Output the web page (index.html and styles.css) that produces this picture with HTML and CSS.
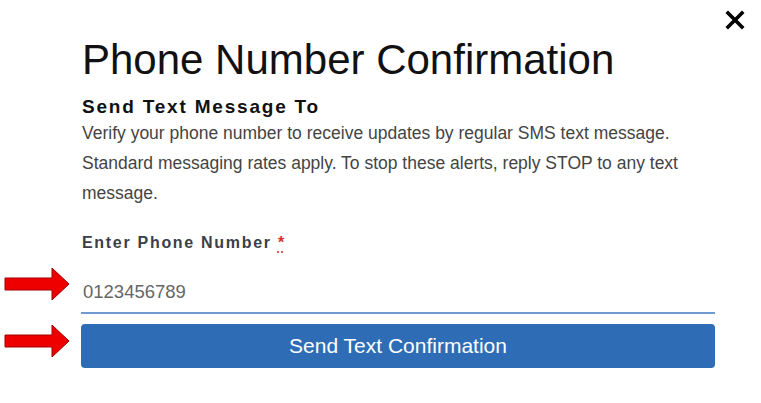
FILE: index.html
```html
<!DOCTYPE html>
<html lang="en">
<head>
  <meta charset="UTF-8">
  <meta name="viewport" content="width=device-width, initial-scale=1.0">
  <title>Phone Number Confirmation</title>
  <link rel="stylesheet" href="styles.css">
</head>
<body>
  <div class="modal">
    <button class="close-btn" aria-label="Close">
      <svg width="20" height="20" viewBox="0 0 20 20">
        <path d="M3 3 L17 17 M17 3 L3 17" stroke="#000" stroke-width="3.6" stroke-linecap="square"/>
      </svg>
    </button>

    <div class="content">
      <h1>Phone Number Confirmation</h1>
      <h2>Send Text Message To</h2>
      <p class="intro">Verify your phone number to receive updates by regular SMS text message. Standard messaging rates apply. To stop these alerts, reply STOP to any text message.</p>

      <label for="phone" class="field-label">Enter Phone Number <abbr title="required">*</abbr></label>
    </div>

    <div class="row">
      <div class="gutter">
        <svg class="arrow" width="66" height="34" viewBox="0 0 66 34">
          <polygon points="1,11 48,11 48,1 65,17 48,33 48,23 1,23" fill="#ee0000" stroke="#a30000" stroke-width="1"/>
        </svg>
      </div>
      <input type="text" id="phone" class="phone-input" value="0123456789">
    </div>

    <div class="row">
      <div class="gutter">
        <svg class="arrow" width="66" height="34" viewBox="0 0 66 34">
          <polygon points="1,11 48,11 48,1 65,17 48,33 48,23 1,23" fill="#ee0000" stroke="#a30000" stroke-width="1"/>
        </svg>
      </div>
      <button class="send-btn">Send Text Confirmation</button>
    </div>
  </div>
</body>
</html>
```

FILE: styles.css
```css
body {
  margin: 0;
  font-family: "Liberation Sans", Arial, sans-serif;
  background: #fff;
}
.modal {
  position: relative;
  width: 761px;
  height: 403px;
}
.close-btn {
  position: absolute;
  top: 10px;
  right: 16px;
  padding: 0;
  border: none;
  background: none;
  cursor: pointer;
}
.content {
  padding: 36px 0 0 82px;
  width: 634px;
}
h1 {
  margin: 0;
  font-size: 42px;
  line-height: 48px;
  font-weight: normal;
  color: #111;
}
h2 {
  margin: 12px 0 0;
  font-size: 19px;
  line-height: 22px;
  letter-spacing: 1.8px;
  color: #111;
}
.intro {
  margin: 0;
  font-size: 17.5px;
  line-height: 30px;
  color: #444;
}
.field-label {
  display: block;
  margin-top: 25px;
  font-size: 16px;
  line-height: 20px;
  font-weight: bold;
  letter-spacing: 1.7px;
  color: #3b4047;
}
.field-label abbr {
  color: #d9302c;
  text-decoration: underline dotted;
  text-underline-offset: 4px;
}
.row {
  display: grid;
  grid-template-columns: 81px 634px;
  align-items: center;
}
.gutter {
  display: flex;
  align-items: center;
  padding-left: 4px;
}
.phone-input {
  box-sizing: border-box;
  width: 634px;
  height: 48px;
  margin-top: 13px;
  padding: 6px 2px 0;
  border: none;
  border-bottom: 2px solid #6f9bd1;
  font-family: "Liberation Sans", Arial, sans-serif;
  font-size: 18.5px;
  color: #666;
  outline: none;
}
.send-btn {
  box-sizing: border-box;
  width: 634px;
  height: 44px;
  margin-top: 10px;
  border: none;
  border-radius: 4px;
  background: #2e6db6;
  color: #fff;
  font-family: "Liberation Sans", Arial, sans-serif;
  font-size: 21px;
  cursor: pointer;
}
```
